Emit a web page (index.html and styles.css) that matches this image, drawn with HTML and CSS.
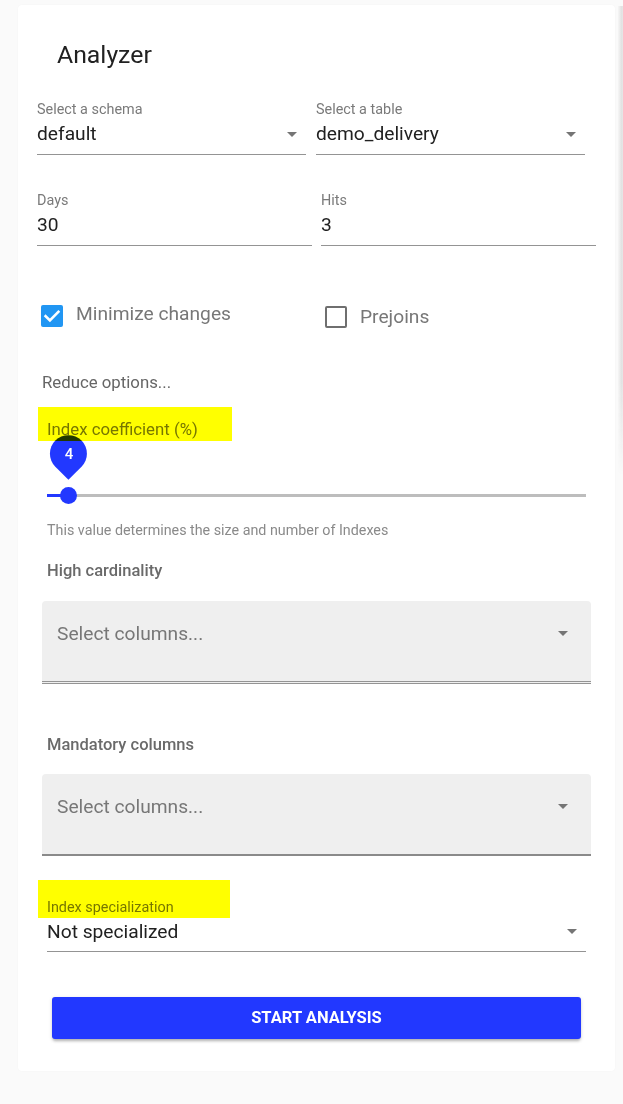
FILE: index.html
```html
<!DOCTYPE html>
<html lang="en">
<head>
<meta charset="utf-8">
<title>Analyzer</title>
<link rel="stylesheet" href="styles.css">
</head>
<body>
<div class="edge"></div>
<div class="card">
  <h1 class="title">Analyzer</h1>

  <div class="row row-top">
    <div class="field field-narrow">
      <div class="field-label">Select a schema</div>
      <div class="field-value"><span>default</span><i class="caret"></i></div>
    </div>
    <div class="field field-narrow">
      <div class="field-label">Select a table</div>
      <div class="field-value"><span>demo_delivery</span><i class="caret"></i></div>
    </div>
  </div>

  <div class="row row-nums">
    <div class="field field-wide">
      <div class="field-label">Days</div>
      <div class="field-value"><span>30</span></div>
    </div>
    <div class="field field-wide">
      <div class="field-label">Hits</div>
      <div class="field-value"><span>3</span></div>
    </div>
  </div>

  <div class="checks">
    <div class="check check-minimize">
      <span class="box box-on">
        <svg viewBox="0 0 22 22" width="22" height="22"><path d="M4.6 11.2 L8.9 15.4 L17.4 6.8" fill="none" stroke="#fff" stroke-width="2.6" stroke-linecap="square"/></svg>
      </span>
      <span class="check-text">Minimize changes</span>
    </div>
    <div class="check check-prejoins">
      <span class="box box-off"></span>
      <span class="check-text">Prejoins</span>
    </div>
  </div>

  <div class="reduce">Reduce options...</div>

  <div class="sub-label coef-label hl-wrap">Index coefficient (%)<span class="hl hl-coef"></span></div>
  <div class="slider">
    <div class="track"><div class="track-fill" style="width:21.5px"></div></div>
    <div class="thumb"></div>
    <div class="pin"><span class="pin-num">4</span></div>
  </div>
  <div class="help">This value determines the size and number of Indexes</div>

  <div class="group-label high-label">High cardinality</div>
  <div class="multi multi-double">
    <span class="placeholder">Select columns...</span><i class="caret caret-lg"></i>
  </div>

  <div class="group-label mand-label">Mandatory columns</div>
  <div class="multi multi-solid">
    <span class="placeholder">Select columns...</span><i class="caret caret-lg"></i>
  </div>

  <div class="spec hl-wrap">
    <div class="field-label">Index specialization</div>
    <div class="field-value"><span>Not specialized</span><i class="caret"></i></div>
    <span class="hl hl-spec"></span>
  </div>

  <button class="start">START ANALYSIS</button>
</div>
</body>
</html>
```

FILE: styles.css
```css
html, body {
  margin: 0;
  padding: 0;
}
body {
  background: #fafafa;
  font-family: Roboto, "Noto Sans", Arial, sans-serif;
  color: #212121;
  width: 623px;
  height: 1104px;
  overflow: hidden;
  position: relative;
}
.edge {
  position: absolute;
  left: 618px;
  top: 6px;
  width: 5px;
  height: 470px;
  background: linear-gradient(to right, #f6f6f6 0%, #e9e9e9 45%, #e1e1e1 75%, #e8e8e8 100%);
  -webkit-mask-image: linear-gradient(to bottom, #000 0%, #000 80%, transparent 100%);
  mask-image: linear-gradient(to bottom, #000 0%, #000 80%, transparent 100%);
}
.card {
  margin: 5px 0 0 18px;
  width: 597px;
  box-sizing: border-box;
  background: #fff;
  border-radius: 4px;
  padding: 36px 0 32px 19px;
  box-shadow: 0 0 2px rgba(0,0,0,0.03);
}
.title {
  margin: 0 0 0 20px;
  font-size: 24.8px;
  line-height: 28px;
  font-weight: 400;
  color: #212121;
}

/* text fields */
.row {
  display: flex;
}
.row-top {
  margin-top: 32px;
  width: 548px;
  gap: 10px;
}
.row-nums {
  margin-top: 37px;
  width: 559px;
  gap: 9px;
}
.field-narrow { width: 269px; }
.field-wide { width: 275px; }
.field {
  border-bottom: 1px solid #949494;
  padding-bottom: 8px;
}
.field-label {
  font-size: 14.4px;
  line-height: 17px;
  color: #7a7a7a;
}
.field-value {
  margin-top: 4px;
  display: flex;
  align-items: center;
  justify-content: space-between;
  font-size: 19.2px;
  line-height: 24px;
  color: #212121;
}
.caret {
  display: block;
  width: 0;
  height: 0;
  border-left: 5px solid transparent;
  border-right: 5px solid transparent;
  border-top: 5.5px solid #757575;
  margin-right: 9px;
}
.caret-lg {
  border-left-width: 5.8px;
  border-right-width: 5.8px;
  border-top-width: 5.8px;
  margin-right: 23px;
  margin-top: 2px;
}

/* checkboxes */
.checks {
  margin-top: 59px;
  height: 24px;
  display: flex;
  padding-left: 4px;
}
.check {
  display: flex;
  align-items: flex-start;
}
.check-minimize { width: 284px; }
.box {
  display: block;
  width: 22px;
  height: 22px;
  box-sizing: border-box;
  border-radius: 2px;
  flex: none;
}
.box svg { display: block; }
.box-on { background: #2196f3; }
.box-off {
  border: 2px solid #6f6f6f;
  width: 21.5px;
  height: 21.5px;
  margin-top: 1px;
}
.check-text {
  margin-left: 13px;
  font-size: 19.2px;
  line-height: 22px;
  color: #777;
}
.check-minimize .check-text { margin-top: -2px; }
.check-prejoins .check-text { margin-top: 0.5px; margin-left: 13.5px; }

.reduce {
  margin: 42.5px 0 0 5px;
  font-size: 16.8px;
  line-height: 20px;
  color: #666;
}

/* highlight overlays */
.hl-wrap { position: relative; }
.hl {
  position: absolute;
  background: #ffff00;
  mix-blend-mode: multiply;
  z-index: 3;
  pointer-events: none;
}
.hl-coef {
  left: -9px;
  top: -12px;
  width: 194px;
  height: 34.5px;
}
.hl-spec {
  left: -9px;
  top: -19px;
  width: 192px;
  height: 38px;
}

.sub-label {
  margin: 27px 0 0 10px;
  font-size: 16.8px;
  line-height: 20px;
  color: #777;
}

/* slider */
.slider {
  position: relative;
  margin-left: 10px;
  width: 539px;
  padding: 55.5px 0 24.5px;
}
.track {
  height: 3px;
  background: #bdbdbd;
}
.track-fill {
  height: 3px;
  background: #2238ff;
}
.thumb {
  position: absolute;
  left: 13px;
  top: 48.5px;
  width: 17px;
  height: 17px;
  border-radius: 50%;
  background: #2238ff;
  z-index: 1;
}
.pin {
  position: absolute;
  left: 2.6px;
  top: -3.5px;
  width: 37.4px;
  height: 37.4px;
  background: #2238ff;
  border-radius: 50% 50% 50% 0;
  transform: rotate(-45deg);
  z-index: 1;
  display: flex;
  align-items: center;
  justify-content: center;
}
.pin-num {
  transform: rotate(45deg);
  color: #fff;
  font-size: 15px;
  font-weight: 500;
  line-height: 15px;
  margin-top: 2px;
}
.help {
  margin-left: 10px;
  font-size: 14.3px;
  line-height: 17px;
  color: #8a8a8a;
}

.group-label {
  margin-left: 10px;
  font-size: 16.5px;
  line-height: 18px;
  font-weight: 500;
  color: #6a6a6a;
}
.high-label { margin-top: 23px; }
.mand-label { margin-top: 52px; }

.multi {
  margin-left: 5px;
  width: 549px;
  height: 80px;
  box-sizing: content-box;
  background: #efefef;
  border-radius: 4px 4px 0 0;
  display: flex;
  align-items: flex-start;
  justify-content: space-between;
  padding: 0;
}
.multi-double { margin-top: 21.5px; border-bottom: 3px double #949494; }
.multi-solid { margin-top: 20px; border-bottom: 2px solid #8a8a8a; }
.placeholder {
  margin: 20.5px 0 0 15px;
  font-size: 19.2px;
  line-height: 24px;
  color: #777;
}
.multi .caret { margin-top: 30px; }

.spec {
  margin: 43px 0 0 10px;
  width: 539px;
  border-bottom: 1px solid #949494;
  padding-bottom: 7.5px;
}
.spec .field-label { color: #777; }
.spec .field-value { margin-top: 3.5px; }

.start {
  display: block;
  margin: 45px 0 0 15px;
  width: 529px;
  height: 42px;
  border: none;
  border-radius: 3px;
  background: #2238ff;
  color: #fff;
  font-family: Roboto, Arial, sans-serif;
  font-size: 16.5px;
  font-weight: 700;
  line-height: 42px;
  padding: 0;
  box-shadow: 0 3px 3px -1px rgba(0,0,0,0.25), 0 1px 4px rgba(0,0,0,0.12);
}
```
